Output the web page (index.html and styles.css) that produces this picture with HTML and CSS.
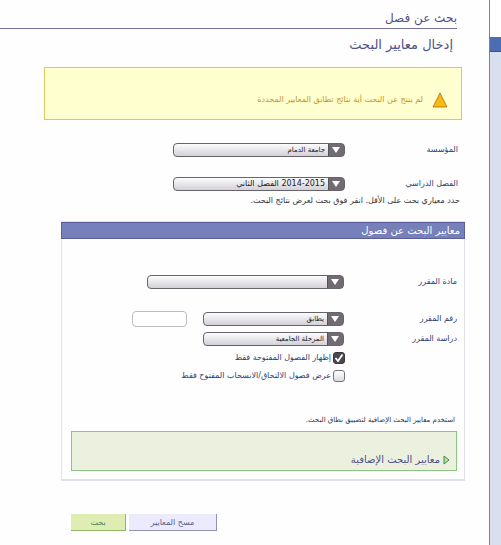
FILE: index.html
```html
<!DOCTYPE html>
<html lang="ar" dir="rtl">
<head>
  <meta charset="UTF-8" />
  <meta name="viewport" content="width=device-width, initial-scale=1" />
  <title>بحث عن فصل</title>
  <link rel="stylesheet" href="styles.css">
</head>
<body>
  <aside class="side"><div class="side-tab"></div></aside>

  <main class="main">
    <h1 class="title">بحث عن فصل</h1>
    <h2 class="subtitle">إدخال معايير البحث</h2>

    <div class="alert">
      <svg class="alert-icon" width="16" height="16" viewBox="0 0 16 16">
        <path d="M8 1 L15 15 H1 Z" fill="#fbb80c" stroke="#b98422" stroke-width="1" />
      </svg>
      <p>لم ينتج عن البحث أية نتائج تطابق المعايير المحددة</p>
    </div>

    <form class="search">
      <div class="row row-top">
        <label for="institution">المؤسسة</label>
        <select id="institution" class="select wide"><option>جامعة الدمام</option></select>
      </div>
      <div class="row row-term">
        <label for="term">الفصل الدراسي</label>
        <select id="term" class="select wide"><option>2014-2015 الفصل الثاني</option></select>
      </div>
      <p class="hint">حدد معياري بحث على الأقل. انقر فوق بحث لعرض نتائج البحث.</p>

      <section class="panel">
        <h3 class="panel-title">معايير البحث عن فصول</h3>
        <div class="panel-body">
          <div class="row">
            <label for="subject">مادة المقرر</label>
            <select id="subject" class="select full"><option></option></select>
          </div>
          <div class="row row-number">
            <label for="match">رقم المقرر</label>
            <select id="match" class="select"><option>يطابق</option></select>
            <input type="text" class="number" aria-label="رقم المقرر">
          </div>
          <div class="row">
            <label for="career">دراسة المقرر</label>
            <select id="career" class="select"><option>المرحلة الجامعية</option></select>
          </div>
          <div class="checks">
            <label><input type="checkbox" checked>إظهار الفصول المفتوحة فقط</label>
            <label><input type="checkbox">عرض فصول الالتحاق/الانسحاب المفتوح فقط</label>
          </div>

          <p class="more-hint">استخدم معايير البحث الإضافية لتضييق نطاق البحث.</p>
          <div class="more">
            <a href="#">
              <svg width="7" height="10" viewBox="0 0 7 10">
                <path d="M1 1 L6 5 L1 9 Z" fill="#b9e3ac" stroke="#3f8a45" stroke-width="1" />
              </svg>
              معايير البحث الإضافية
            </a>
          </div>
        </div>
      </section>

      <div class="buttons">
        <button type="reset" class="btn clear">مسح المعايير</button>
        <button type="submit" class="btn go">بحث</button>
      </div>
    </form>
  </main>
</body>
</html>
```

FILE: styles.css
```css
* {
  box-sizing: border-box;
}
body {
  display: flex;
  min-height: 100vh;
  margin: 0;
  background: #fefefe;
  color: #333;
  font-family: "DejaVu Sans", sans-serif;
  font-size: 8px;
  line-height: 12px;
}
h1, h2, h3, p {
  margin: 0;
}

/* side strip */
.side {
  flex: none;
  width: 12px;
  padding-top: 37px;
  border-left: 1px solid #77839c;
  background: linear-gradient(#fff 37px, #d8dfef 37px);
}
.side-tab {
  height: 15px;
  background: #4c6cb3;
  border-bottom: 1px solid #34508f;
}

.main {
  flex: 1;
  min-width: 0;
}
.title {
  margin-right: 32px;
  padding-top: 8px;
  border-bottom: 1px solid #77709c;
  color: #4f5088;
  font-size: 12px;
  font-weight: normal;
  line-height: 20px;
}
.subtitle {
  margin: 6px 36px 0 0;
  color: #4f5088;
  font-size: 13px;
  font-weight: normal;
  line-height: 20px;
}

.alert {
  display: flex;
  align-items: center;
  gap: 9px;
  height: 53px;
  margin: 12px 27px 0 44px;
  padding: 12px 13px 0 0;
  border: 1px solid #dcc663;
  background: #ffffcf;
  color: #c4962a;
}

/* form rows */
.search {
  padding: 0 24px 0 61px;
}
.row {
  display: flex;
  align-items: center;
  margin-bottom: 6px;
}
.row label {
  width: 113px;
  flex: none;
  color: #2f3d74;
}
.row-top {
  margin-top: 23px;
  margin-bottom: 20px;
}
.row-top, .row-term {
  padding-right: 7px;
}
.row-term {
  margin-bottom: 4px;
}
.select {
  width: 141px;
  height: 14px;
  padding: 0 19px 0 4px;
  border: 1px solid #66636a;
  border-radius: 4px;
  appearance: none;
  background:
    url("data:image/svg+xml,%3Csvg xmlns='http://www.w3.org/2000/svg' width='16' height='12'%3E%3Crect width='16' height='12' fill='%23716c74'/%3E%3Cpath d='M4 3 H12 L8 9 Z' fill='%23fff'/%3E%3Cpath d='M0.5 0 V12' stroke='%2355525a'/%3E%3C/svg%3E") right center no-repeat,
    linear-gradient(#fcfcfd, #d3d0d8);
  color: #222;
  font-family: inherit;
  font-size: 7px;
  line-height: 12px;
}
.wide {
  width: 172px;
}
.row-term .select {
  font-size: 8px;
}
.full {
  width: 197px;
}
.hint {
  padding-right: 5px;
}

/* criteria box */
.panel {
  margin-top: 14px;
  border: 1px solid #dfe1ee;
  border-bottom-width: 2px;
}
.panel-title {
  margin: 0 -1px;
  padding-right: 4px;
  border: 1px solid #5a6096;
  background: #7680ba;
  color: #fff;
  font-size: 10px;
  font-weight: normal;
  line-height: 15px;
}
.panel-body {
  padding: 36px 7px 8px 9px;
}
.row-number {
  margin-top: 22px;
  margin-bottom: 5px;
}
.number {
  width: 55px;
  height: 16px;
  margin-right: 16px;
  border: 1px solid #bdbcc0;
  border-radius: 4px;
  background: #fff;
  font-size: 8px;
}
.checks {
  display: flex;
  flex-direction: column;
  align-items: flex-start;
  gap: 6px;
  padding-right: 112px;
  color: #2f3d74;
}
.checks label {
  display: flex;
  align-items: center;
  gap: 2px;
}
.checks input {
  width: 12px;
  height: 12px;
  margin: 0;
  border: 1px solid #77747b;
  border-radius: 3px;
  appearance: none;
  background: linear-gradient(#fff, #dddbe0);
}
.checks input:checked {
  border-color: #39353c;
  background: url("data:image/svg+xml,%3Csvg xmlns='http://www.w3.org/2000/svg' width='10' height='10'%3E%3Cpath d='M1.5 5 L4 8 L8.5 1.5' fill='none' stroke='%23fff' stroke-width='1.8'/%3E%3C/svg%3E") center no-repeat, #4c474f;
}
.more-hint {
  margin-top: 32px;
  padding-right: 2px;
  font-size: 7px;
}
.more {
  height: 40px;
  margin-top: 5px;
  padding: 22px 6px 0 0;
  border: 1px solid #8cc482;
  background: #ecf1df;
}
.more a {
  display: flex;
  align-items: center;
  gap: 3px;
  color: #4f5088;
  font-size: 10px;
  text-decoration: none;
}

.buttons {
  display: flex;
  justify-content: flex-end;
  gap: 3px;
  margin-top: 33px;
  padding-left: 10px;
}
.btn {
  height: 17px;
  padding: 0;
  border: 0 solid;
  border-width: 0 1px 1px 0;
  font-family: inherit;
  font-size: 8px;
  line-height: 15px;
}
.clear {
  width: 88px;
  border-color: #8f91b6;
  background: #ebebfd;
  color: #5c5c88;
}
.go {
  width: 55px;
  border-color: #8cb866;
  background: #dfedb4;
  color: #4c8048;
}
```
